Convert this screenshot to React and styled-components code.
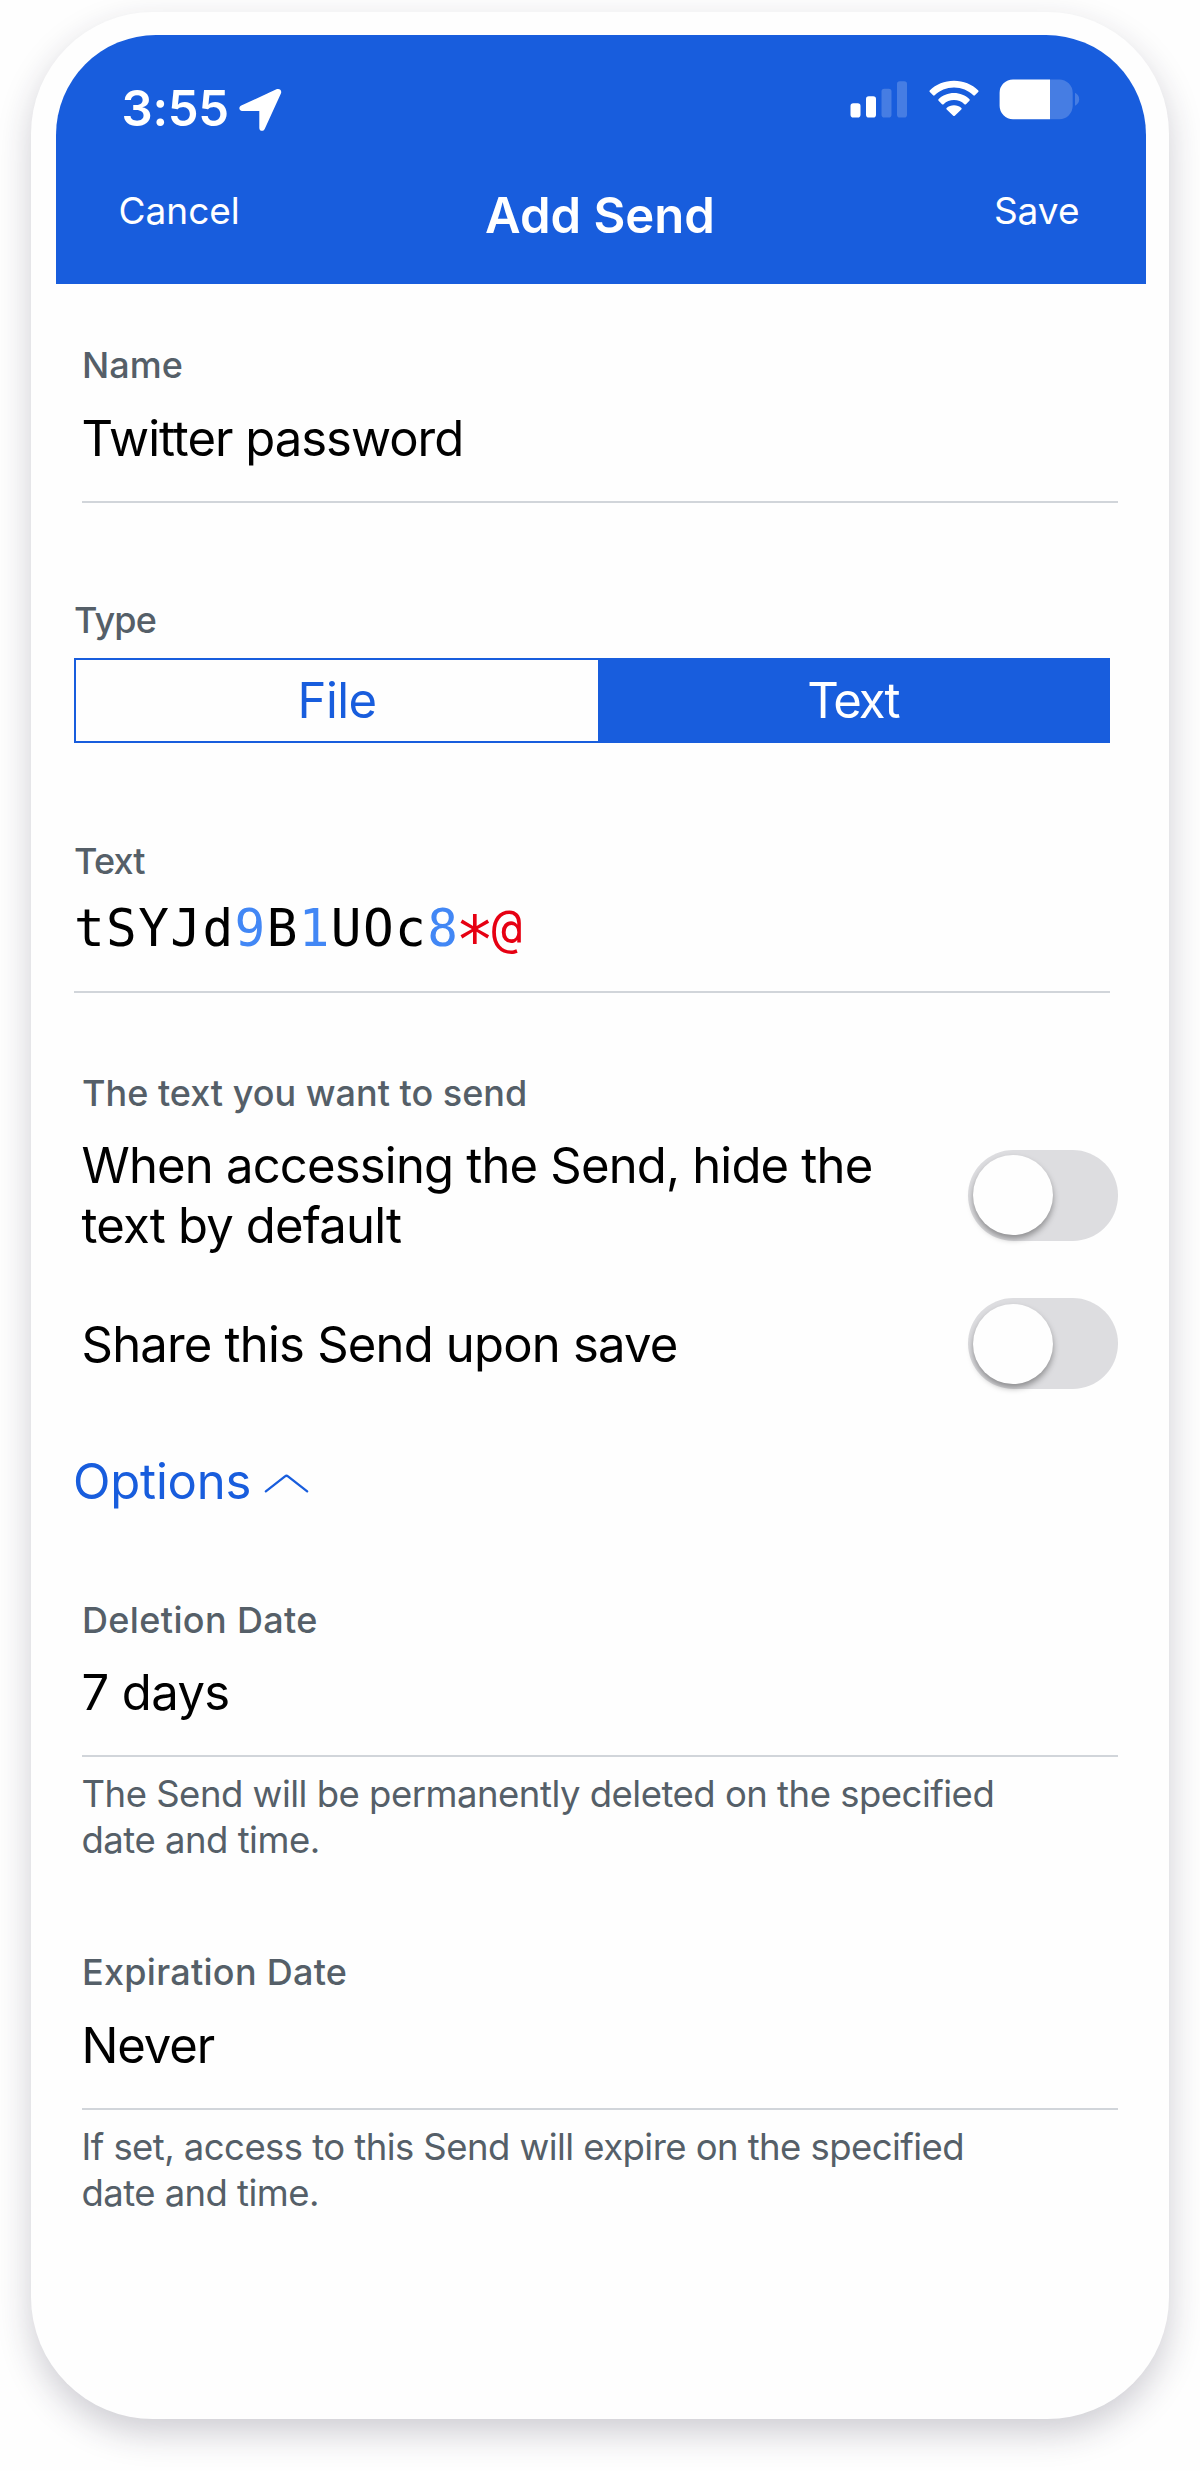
import React from "react";
import styled, { createGlobalStyle } from "styled-components";

const BLUE = "#185ddd";
const SLATE = "#555f68";

const GlobalStyle = createGlobalStyle`
  * { box-sizing: border-box; }
  body { margin: 0; background: #fefefe; font-family: Inter, "Liberation Sans", sans-serif; }
`;

const Page = styled.div`
  width: 1200px;
  height: 2471px;
  padding: 12px 31px 0;
  overflow: hidden;
`;

const Phone = styled.main`
  width: 1138px;
  height: 2407px;
  padding: 23px 24px 0;
  border-radius: 122px;
  background: #fefefe;
  box-shadow: 0 14px 34px rgba(35, 31, 60, 0.22);
`;

const Header = styled.header`
  width: 1090px;
  height: 248.7px;
  margin-left: 0.5px;
  border-radius: 100px 100px 0 0;
  background: ${BLUE};
  color: #fff;
`;

const StatusBar = styled.div`
  display: flex;
  justify-content: space-between;
  height: 134px;
  padding: 43px 66px 0 66px;
`;

const Clock = styled.div`
  display: grid;
  grid-template-columns: 117px auto;
`;

const Indicators = styled.div`
  display: flex;
  align-items: flex-start;
`;

const NavBar = styled.nav`
  display: grid;
  grid-template-columns: 1fr auto 1fr;
  padding: 0 66px 0 63px;
`;

const Txt = styled.div`
  font-size: ${(p) => p.$size || 49}px;
  font-weight: ${(p) => p.$weight || 400};
  line-height: ${(p) => p.$lh || 60}px;
  letter-spacing: ${(p) => p.$ls || 0}px;
  white-space: pre;
`;

const ClockText = styled(Txt)`
  padding-top: 1px;
`;

const NavAction = styled(Txt)`
  justify-self: ${(p) => p.$side};
  padding-top: 12px;
`;

const NavTitle = styled(Txt)`
  padding: 17px 0 0 2px;
`;

const Form = styled.section`
  display: flex;
  flex-direction: column;
  align-items: flex-start;
`;

const Field = styled.div`
  width: 1036px;
  margin-left: ${(p) => (p.$outset ? 19 : 27)}px;
  margin-top: ${(p) => p.$top}px;
`;

const Label = styled(Txt)`
  color: ${SLATE};
`;

const Value = styled(Txt)`
  color: #000;
  margin: ${(p) => p.$top || 0}px 0 0 -0.5px;
`;

const ToggleText = styled(Value)`
  padding-top: 2px;
`;

const Divider = styled.div`
  height: 2px;
  margin-top: ${(p) => p.$top}px;
  background: #d1d5da;
`;

const Helper = styled(Txt)`
  margin: 14px 0 -0.5px -0.5px;
  color: ${SLATE};
`;

const Segments = styled.div`
  display: grid;
  grid-template-columns: 522px 1fr;
  height: 85px;
  margin-top: 16px;
  border: 2px solid ${BLUE};
`;

const Segment = styled(Txt)`
  display: flex;
  justify-content: center;
  align-items: center;
  padding-top: 2px;
  background: ${(p) => (p.$active ? BLUE : "#fefefe")};
  color: ${(p) => (p.$active ? "#fff" : BLUE)};
`;

const Secret = styled(Txt)`
  margin-top: 16px;
  font-family: "DejaVu Sans Mono", monospace;
  color: #000;
`;

const Digit = styled.span`
  color: #4287f5;
`;

const Special = styled.span`
  color: #e60012;
`;

const Star = styled(Special)`
  position: relative;
  top: 17px;
  margin-left: -4px;
  font-size: 65px;
  line-height: 0;
  letter-spacing: -3px;
`;

const ToggleList = styled.div`
  display: grid;
  grid-template-rows: 149px 148px;
  margin: 6px 0 -1px;
`;

const ToggleRow = styled.div`
  display: flex;
  align-items: center;
  justify-content: space-between;
`;

const Track = styled.div`
  width: 150px;
  height: 91px;
  padding: 5.5px 5px;
  border-radius: 46px;
  background: #dddde0;
`;

const Knob = styled.div`
  width: 80px;
  height: 80px;
  border-radius: 50%;
  background: #fefefe;
  box-shadow: 0 4px 6px rgba(0, 0, 0, 0.36);
`;

const OptionsRow = styled.div`
  display: flex;
  align-items: center;
  gap: 12.5px;
  margin: 35px 0 -1px 18px;
  color: ${BLUE};
`;

const LocationIcon = () => (
  <svg width="43" height="43" viewBox="0 0 43 43" style={{ marginTop: 9.5 }}>
    <path
      d="M37.4 1.3 C40.4 0 43.2 2.3 41.9 5.5 L25.7 41 C24.4 44 20.3 43.2 20.3 39.9 V22.9 H3.2 C0 22.9 -0.8 18.9 2.3 17.5 Z"
      fill="#fff"
    />
  </svg>
);

const SignalIcon = () => (
  <svg width="58" height="37" viewBox="0 0 58 37" style={{ marginTop: 2.5 }}>
    <g fill="#fff">
      <rect x="0.5" y="22.3" width="10" height="14.2" rx="2.8" />
      <rect x="16" y="15.3" width="10" height="21.2" rx="2.8" />
      <rect x="31.5" y="7.8" width="10" height="28.7" rx="2.8" opacity="0.2" />
      <rect x="47" y="0.3" width="10" height="36.2" rx="2.8" opacity="0.2" />
    </g>
  </svg>
);

const WifiIcon = () => (
  <svg width="50" height="37" viewBox="0 0 50 37" style={{ margin: "2px 0 0 20.5px" }}>
    <g fill="#fff">
      <path d="M25 0.8 C34.5 0.8 43 4.4 49.3 10.4 Q50 11.2 49.2 12 L45.9 15.3 Q45.1 16 44.3 15.3 C39.3 10.5 32.6 7.6 25 7.6 C17.4 7.6 10.7 10.5 5.7 15.3 Q4.9 16 4.1 15.3 L0.8 12 Q0 11.2 0.7 10.4 C7 4.4 15.5 0.8 25 0.8 Z" />
      <path d="M25 13 C31 13 36.4 15.3 40.5 19.2 Q41.2 20 40.4 20.8 L37 24.2 Q36.2 24.9 35.4 24.2 C32.6 21.6 29 20.1 25 20.1 C21 20.1 17.4 21.6 14.6 24.2 Q13.8 24.9 13 24.2 L9.6 20.8 Q8.8 20 9.5 19.2 C13.6 15.3 19 13 25 13 Z" />
      <path d="M25 25.2 C27.8 25.2 30.4 26.2 32.4 27.9 Q33.1 28.7 32.3 29.5 L25.8 35.7 Q25 36.5 24.2 35.7 L17.7 29.5 Q16.9 28.7 17.6 27.9 C19.6 26.2 22.2 25.2 25 25.2 Z" />
    </g>
  </svg>
);

const BatteryIcon = () => (
  <svg width="81" height="41" viewBox="0 0 81 41" style={{ margin: "0.5px 0 0 20px" }}>
    <g fill="#fff">
      <path d="M51 0.4 H60 A13.4 13.4 0 0 1 73.7 13.8 V26.8 A13.4 13.4 0 0 1 60 40.2 H51 Z" opacity="0.2" />
      <path d="M51 0.4 H14 A13.4 13.4 0 0 0 0.6 13.8 V26.8 A13.4 13.4 0 0 0 14 40.2 H51 Z" />
      <path d="M76 13.8 C81.6 16.6 81.6 24 76 26.8 Z" opacity="0.2" />
    </g>
  </svg>
);

const ChevronIcon = () => (
  <svg width="45" height="20" viewBox="0 0 45 20" style={{ marginTop: 3 }}>
    <path
      d="M1.8 18.3 L21 3.4 Q22.5 2.2 24 3.4 L43.2 18.3"
      fill="none"
      stroke={BLUE}
      strokeWidth="2.3"
      strokeLinecap="round"
    />
  </svg>
);

const Toggle = () => (
  <Track>
    <Knob />
  </Track>
);

const FieldLabel = ({ ls, children }) => (
  <Label $size={36} $weight={500} $lh={44} $ls={ls}>{children}</Label>
);

const SelectField = ({ top, label, labelLs, value, valueLs, valueTop, helper, helperLs }) => (
  <Field $top={top}>
    <FieldLabel ls={labelLs}>{label}</FieldLabel>
    <Value $top={valueTop} $lh={62} $ls={valueLs}>{value}</Value>
    <Divider $top={31} />
    <Helper $size={36.5} $lh={46} $ls={helperLs}>{helper}</Helper>
  </Field>
);

export default function App() {
  return (
    <>
      <GlobalStyle />
      <Page>
        <Phone>
          <Header>
            <StatusBar>
              <Clock>
                <ClockText $weight={600} $ls={-0.3}>3:55</ClockText>
                <LocationIcon />
              </Clock>
              <Indicators>
                <SignalIcon />
                <WifiIcon />
                <BatteryIcon />
              </Indicators>
            </StatusBar>
            <NavBar>
              <NavAction $size={37} $side="start">Cancel</NavAction>
              <NavTitle $weight={600}>Add Send</NavTitle>
              <NavAction $size={37} $side="end">Save</NavAction>
            </NavBar>
          </Header>
          <Form>
            <Field $top={59.3}>
              <FieldLabel>Name</FieldLabel>
              <Value $top={21} $lh={61} $ls={-1}>Twitter password</Value>
              <Divider $top={32} />
            </Field>
            <Field $outset $top={95}>
              <FieldLabel ls={-0.8}>Type</FieldLabel>
              <Segments>
                <Segment $ls={-0.6}>File</Segment>
                <Segment $active $ls={-1.9}>Text</Segment>
              </Segments>
            </Field>
            <Field $outset $top={96}>
              <FieldLabel ls={-0.8}>Text</FieldLabel>
              <Secret $size={51} $ls={1.4}>
                tSYJd<Digit>9</Digit>B<Digit>1</Digit>UOc<Digit>8</Digit>
                <Star>*</Star>
                <Special>@</Special>
              </Secret>
              <Divider $top={32} />
            </Field>
            <Field $top={78}>
              <FieldLabel>The text you want to send</FieldLabel>
              <ToggleList>
                <ToggleRow>
                  <ToggleText $lh={60.7} $ls={-0.82}>{"When accessing the Send, hide the\ntext by default"}</ToggleText>
                  <Toggle />
                </ToggleRow>
                <ToggleRow>
                  <ToggleText $ls={-0.8}>Share this Send upon save</ToggleText>
                  <Toggle />
                </ToggleRow>
              </ToggleList>
            </Field>
            <OptionsRow>
              <Txt $ls={-0.2}>Options</Txt>
              <ChevronIcon />
            </OptionsRow>
            <SelectField
              top={87}
              label="Deletion Date"
              labelLs={0.36}
              value="7 days"
              valueLs={-0.6}
              valueTop={20}
              helper={"The Send will be permanently deleted on the specified\ndate and time."}
              helperLs={-0.5}
            />
            <SelectField
              top={88}
              label="Expiration Date"
              labelLs={0.28}
              value="Never"
              valueLs={-1.1}
              valueTop={21}
              helper={"If set, access to this Send will expire on the specified\ndate and time."}
              helperLs={-0.56}
            />
          </Form>
        </Phone>
      </Page>
    </>
  );
}
